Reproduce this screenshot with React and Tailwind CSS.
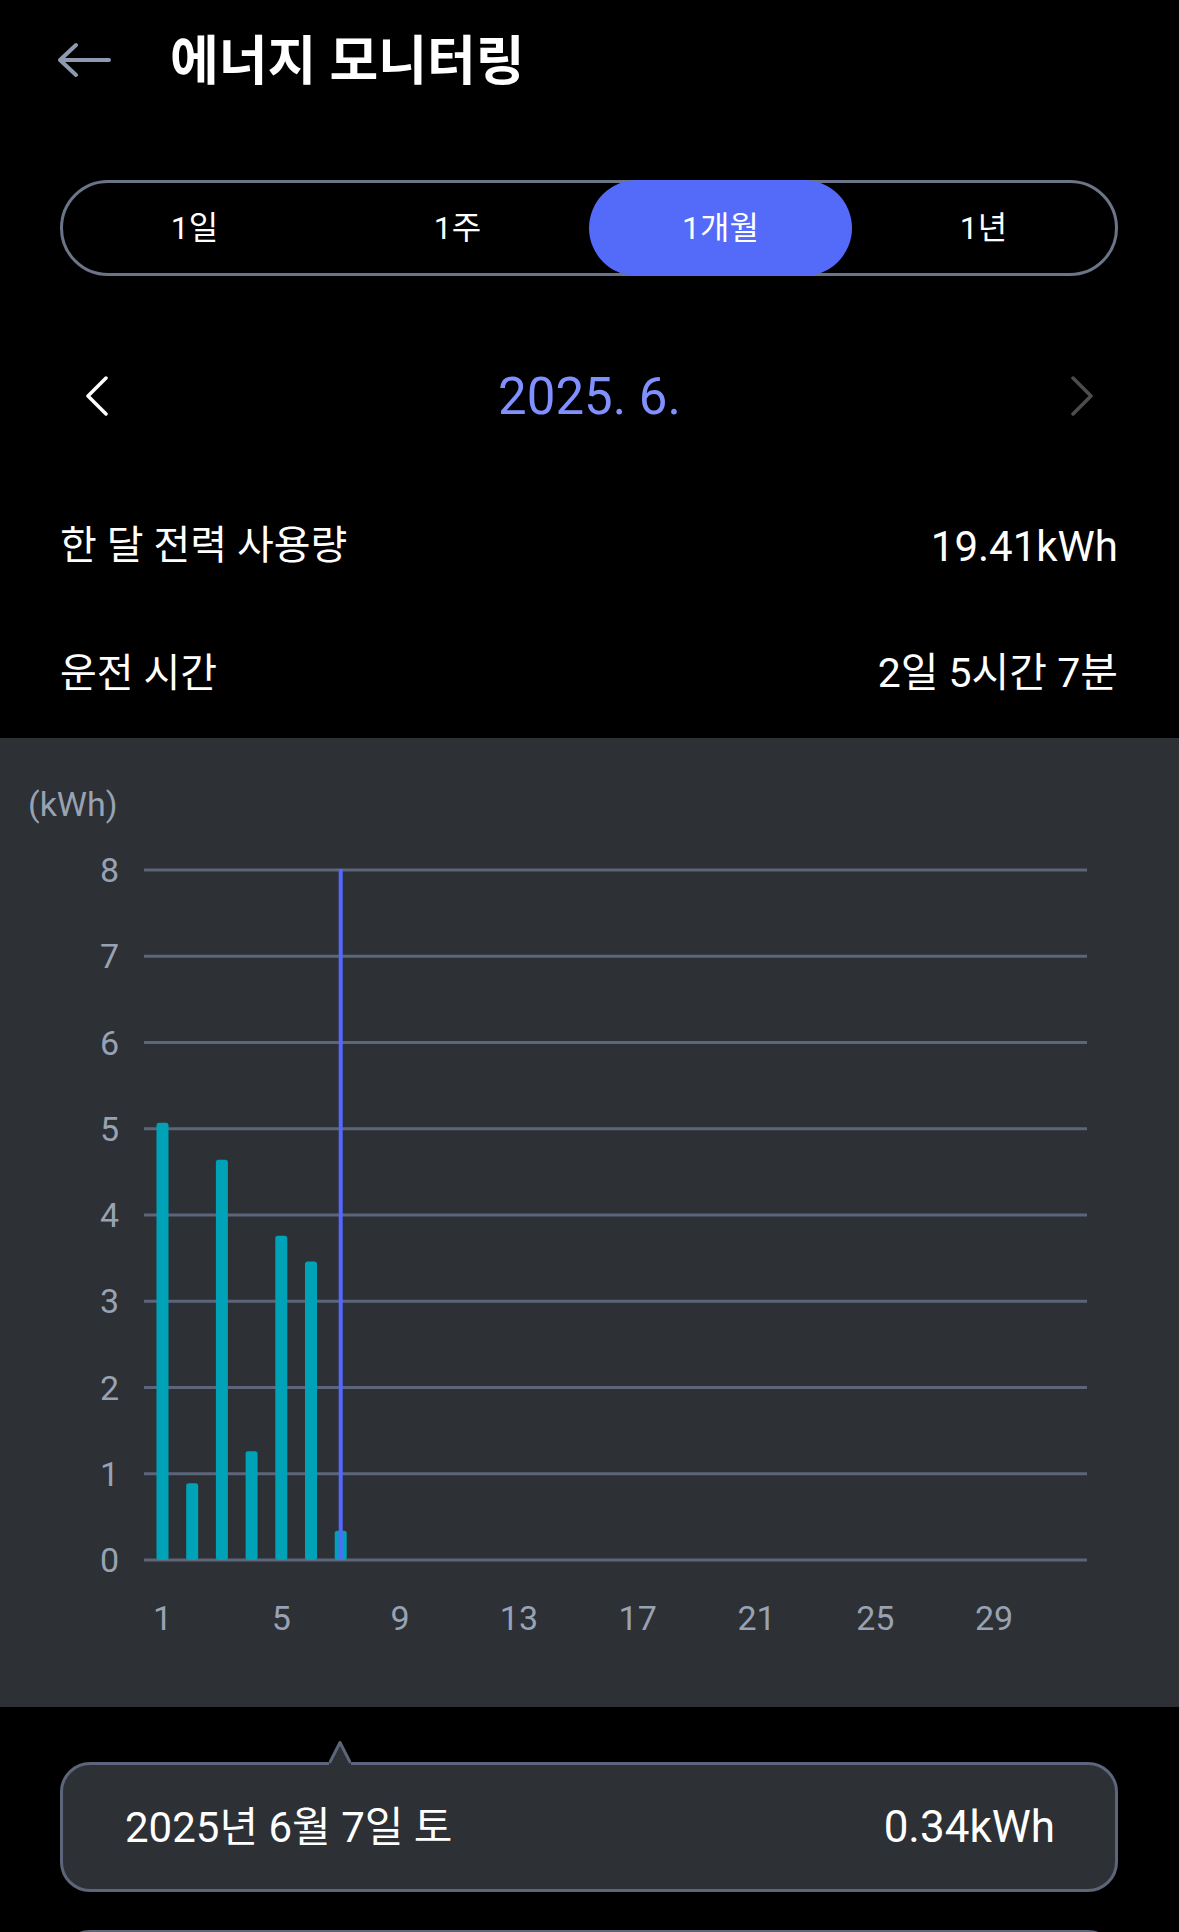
import React from "react"

const bars = [5.07, 0.89, 4.64, 1.26, 3.76, 3.46, 0.34]
const tabs = ["1일", "1주", "1개월", "1년"]

const BASE = 822
const STEP = 86.25
const dayX = (d) => 162.5 + (d - 1) * 29.7

function Chart() {
    return (
        <div className="bg-[#2d3034] h-[969px]">
            <svg width="1179" height="969" viewBox="0 0 1179 969" className="block">
                <text x="28" y="66" dominantBaseline="central" fontSize="34" fill="#98a2b3">(kWh)</text>
                {[0, 1, 2, 3, 4, 5, 6, 7, 8].map((v) => (
                    <g key={v}>
                        <line x1="144" x2="1087" y1={BASE - v * STEP} y2={BASE - v * STEP} stroke="#5c6579" strokeWidth="3" />
                        <text x="119" y={BASE - v * STEP} textAnchor="end" dominantBaseline="central" fontSize="34" fill="#98a2b3">{v}</text>
                    </g>
                ))}
                {bars.map((v, i) => (
                    <rect key={i} x={dayX(i + 1) - 6} y={BASE - v * STEP} width="12" height={v * STEP} rx="2.5" fill="#00a2b8" />
                ))}
                <line x1={dayX(7)} x2={dayX(7)} y1={BASE - 8 * STEP - 1} y2={BASE} stroke="#5468ff" strokeWidth="4" />
                {[1, 5, 9, 13, 17, 21, 25, 29].map((d) => (
                    <text key={d} x={dayX(d)} y="880" textAnchor="middle" dominantBaseline="central" fontSize="34" fill="#98a2b3">{d}</text>
                ))}
            </svg>
        </div>
    )
}

export default function App() {
    return (
        <div className="min-h-screen bg-black text-white font-[family-name:Roboto,'Noto_Sans_CJK_KR',sans-serif] overflow-hidden">
            {/* header */}
            <div className="h-[120px] flex items-center pl-[58px]">
                <svg width="54" height="36" viewBox="0 0 54 36" fill="none" stroke="#8e9ab0" strokeWidth="4" strokeLinecap="round" strokeLinejoin="round">
                    <path d="M51 18H3M18 3L2 18L18 33" />
                </svg>
                <h1 className="ml-[58px] mt-[4px] text-[53px] font-bold leading-none">에너지 모니터링</h1>
            </div>

            {/* period tabs */}
            <div className="mt-[60px] ml-[60px] mr-[61px] h-[96px] border-[3px] border-[#6b7587] rounded-full grid grid-cols-4">
                {tabs.map((t, i) => (
                    <div key={t}
                        className={`flex items-center justify-center text-[32px] ${i === 2 ? "bg-[#546af9] rounded-full -my-[3px]" : ""}`}>
                        {t}
                    </div>
                ))}
            </div>

            {/* month nav */}
            <div className="mt-[80px] h-[80px] px-[85px] flex items-center justify-between">
                <svg width="24" height="40" viewBox="0 0 24 40" fill="none" stroke="#ffffff" strokeWidth="3.5" strokeLinecap="round" strokeLinejoin="round">
                    <path d="M21 2L3 20L21 38" />
                </svg>
                <span className="text-[51px] text-[#8190ff] leading-none">2025. 6.</span>
                <svg width="24" height="40" viewBox="0 0 24 40" fill="none" stroke="#4d4d4d" strokeWidth="3.5" strokeLinecap="round" strokeLinejoin="round">
                    <path d="M3 2L21 20L3 38" />
                </svg>
            </div>

            {/* summary */}
            <div className="mt-[46px] pl-[60px] pr-[61px]">
                <div className="h-[128px] flex items-center justify-between text-[40px]">
                    <span>한 달 전력 사용량</span>
                    <span className="text-[42px]">19.41kWh</span>
                </div>
                <div className="h-[128px] flex items-center justify-between text-[40px]">
                    <span>운전 시간</span>
                    <span className="text-[41px]">2일 5시간 7분</span>
                </div>
            </div>

            <Chart />

            {/* selected day */}
            <div className="mt-[55px] ml-[60px] mr-[61px] relative">
                <svg width="22" height="24" viewBox="0 0 22 24" className="absolute left-[269px] -top-[21px]">
                    <polygon points="0,21 11,1.5 22,21 22,24 0,24" fill="#2d3034" />
                    <polyline points="0.5,22 11,1.5 21.5,22" fill="none" stroke="#5c6579" strokeWidth="3" strokeLinejoin="round" />
                </svg>
                <div className="h-[130px] bg-[#2d3034] border-[3px] border-[#5c6579] rounded-[30px] flex items-center justify-between pl-[62px] pr-[60px]">
                    <span className="text-[42px]">2025년 6월 7일 토</span>
                    <span className="text-[44px]">0.34kWh</span>
                </div>
            </div>
            <div className="mt-[38px] ml-[60px] mr-[61px] h-[130px] bg-[#2d3034] border-[3px] border-[#5c6579] rounded-[30px]"></div>
        </div>
    )
}
